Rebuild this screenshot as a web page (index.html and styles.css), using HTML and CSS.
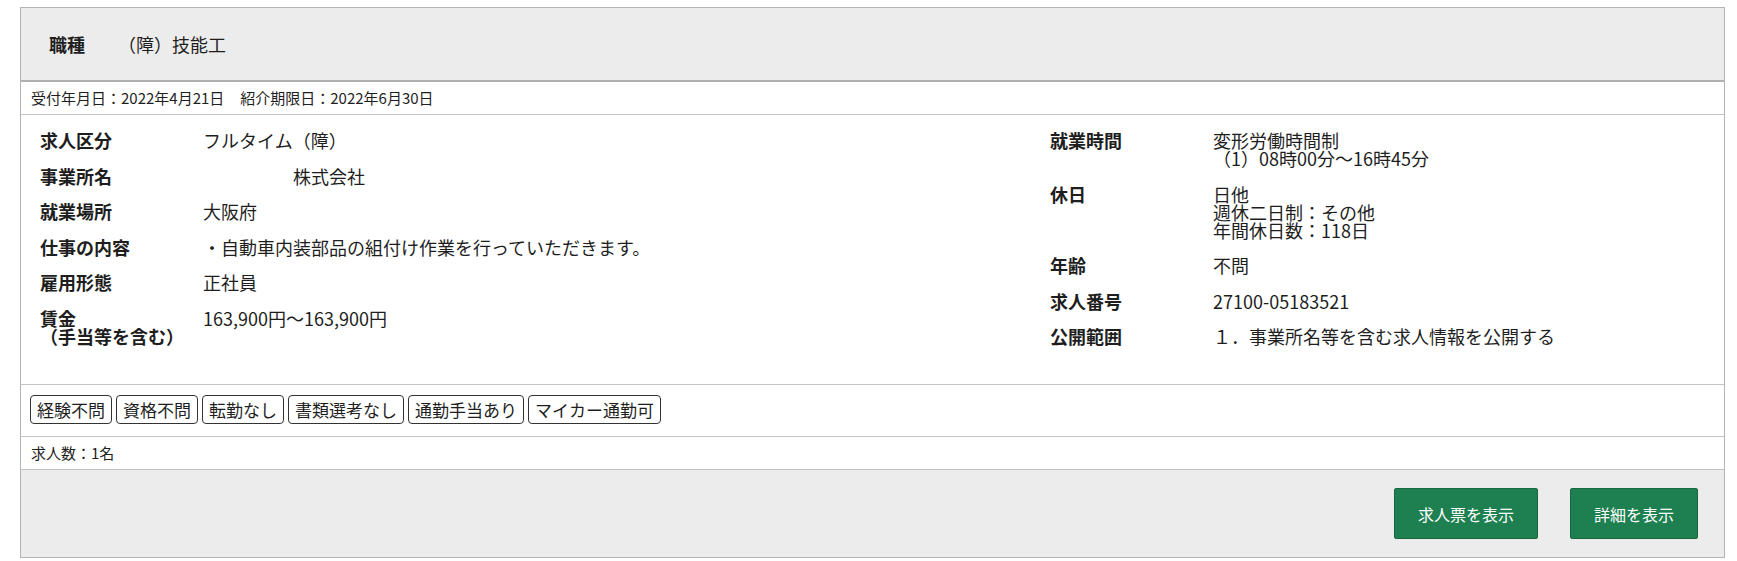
FILE: index.html
```html
<!DOCTYPE html>
<html lang="ja">
<head>
<meta charset="utf-8">
<title>求人情報</title>
<link rel="stylesheet" href="styles.css">
</head>
<body>
<div class="card">
  <div class="card-head">
    <span class="head-label">職種</span>
    <span class="head-value">（障）技能工</span>
  </div>
  <div class="dates">
    <span>受付年月日：2022年4月21日</span>
    <span>紹介期限日：2022年6月30日</span>
  </div>
  <div class="details">
    <dl class="col col-left">
      <dt>求人区分</dt><dd>フルタイム（障）</dd>
      <dt>事業所名</dt><dd>　　　　　株式会社</dd>
      <dt>就業場所</dt><dd>大阪府</dd>
      <dt>仕事の内容</dt><dd>・自動車内装部品の組付け作業を行っていただきます。</dd>
      <dt>雇用形態</dt><dd>正社員</dd>
      <dt>賃金<br>（手当等を含む）</dt><dd>163,900円～163,900円</dd>
    </dl>
    <dl class="col col-right">
      <dt>就業時間</dt><dd>変形労働時間制<br>（1）08時00分～16時45分</dd>
      <dt>休日</dt><dd>日他<br>週休二日制：その他<br>年間休日数：118日</dd>
      <dt>年齢</dt><dd>不問</dd>
      <dt>求人番号</dt><dd>27100-05183521</dd>
      <dt>公開範囲</dt><dd>１．事業所名等を含む求人情報を公開する</dd>
    </dl>
  </div>
  <div class="tags">
    <span class="tag">経験不問</span>
    <span class="tag">資格不問</span>
    <span class="tag">転勤なし</span>
    <span class="tag">書類選考なし</span>
    <span class="tag">通勤手当あり</span>
    <span class="tag">マイカー通勤可</span>
  </div>
  <div class="count">求人数：1名</div>
  <div class="card-foot">
    <button class="btn" type="button">求人票を表示</button>
    <button class="btn" type="button">詳細を表示</button>
  </div>
</div>
</body>
</html>
```
FILE: styles.css
```css
html, body {
  margin: 0;
  padding: 0;
  background: #fff;
}
body {
  padding: 7px 12px 0 20px;
  font-family: "Noto Sans CJK JP", "Noto Sans", sans-serif;
  color: #1e1e1e;
}
.card {
  border: 1px solid #b4b4b4;
  background: #fff;
}
.card-head {
  height: 72px;
  display: flex;
  align-items: center;
  padding-left: 28px;
  background: #ececec;
  border-bottom: 2px solid #b0b0b0;
  font-size: 18px;
}
.head-label {
  font-weight: bold;
  width: 69px;
}
.head-value {
  font-weight: normal;
}
.dates {
  display: flex;
  gap: 16px;
  height: 32px;
  line-height: 32px;
  padding-left: 10px;
  font-size: 15px;
  border-bottom: 1px solid #c4c4c4;
}
.details {
  display: grid;
  grid-template-columns: 1010px 1fr;
  padding: 16px 19px 39px;
  border-bottom: 1px solid #c4c4c4;
}
.col {
  margin: 0;
  display: grid;
  grid-template-columns: 163px 1fr;
  row-gap: 17.5px;
  align-content: start;
  font-size: 18px;
  line-height: 18px;
}
.col dt {
  font-weight: bold;
  margin: 0;
}
.col dd {
  margin: 0;
}
.tags {
  display: flex;
  gap: 4px;
  padding: 10px 0 12px 9px;
  border-bottom: 1px solid #c4c4c4;
}
.tag {
  display: inline-block;
  height: 27px;
  line-height: 27px;
  padding: 0 6px;
  border: 1px solid #333;
  border-radius: 4px;
  font-size: 17px;
  color: #1e1e1e;
}
.count {
  height: 32px;
  line-height: 32px;
  padding-left: 10px;
  font-size: 15px;
  border-bottom: 1px solid #c4c4c4;
}
.card-foot {
  height: 87px;
  display: flex;
  justify-content: flex-end;
  align-items: center;
  gap: 32px;
  padding-right: 26px;
  background: #ececec;
}
.btn {
  height: 51px;
  padding: 0 23px;
  background: #1e7f50;
  border: 1px solid #17673f;
  border-radius: 2px;
  color: #fff;
  font-family: "Noto Sans CJK JP", "Noto Sans", sans-serif;
  font-size: 16px;
}
```
